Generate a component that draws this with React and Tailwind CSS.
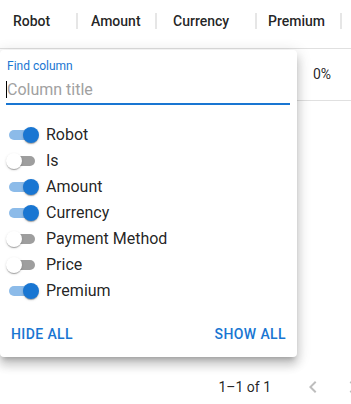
import React from 'react';

const headers = [
  { title: 'Robot', w: 'w-[78px]', pl: 'pl-[13px]' },
  { title: 'Amount', w: 'w-[79px]', pl: 'pl-[13px]' },
  { title: 'Currency', w: 'w-[100px]', pl: 'pl-[16px]' },
  { title: 'Premium', w: 'w-[85px]', pl: 'pl-[11px]' },
];

const columns = [
  { name: 'Robot', on: true },
  { name: 'Is', on: false },
  { name: 'Amount', on: true },
  { name: 'Currency', on: true },
  { name: 'Payment Method', on: false },
  { name: 'Price', on: false },
  { name: 'Premium', on: true },
];

const thumbShadow =
  'shadow-[0px_2px_1px_-1px_rgba(0,0,0,0.2),0px_1px_1px_0px_rgba(0,0,0,0.14),0px_1px_3px_0px_rgba(0,0,0,0.12)]';

const Toggle = ({ on }) => (
  <div className="relative w-[46px] h-[26px] shrink-0">
    <div
      className={
        'absolute left-[9px] top-[8px] w-[26px] h-[10px] rounded-full ' +
        (on ? 'bg-[#8cbbe9]' : 'bg-[#9e9e9e]')
      }
    />
    {on ? (
      <div className={'absolute left-[23px] top-[5px] w-[16px] h-[16px] rounded-full bg-[#1976d2] ' + thumbShadow} />
    ) : (
      <div className={'absolute left-[6px] top-[5px] w-[16px] h-[16px] rounded-full bg-white ' + thumbShadow} />
    )}
  </div>
);

const PageButton = ({ d }) => (
  <div className="w-10 h-10 flex items-center justify-center shrink-0">
    <svg width="24" height="24" viewBox="0 0 24 24" fill="rgba(0,0,0,0.26)">
      <path d={d} />
    </svg>
  </div>
);

export default function App() {
  return (
    <div className="relative w-[351px] h-[404px] overflow-hidden bg-white font-['Roboto',sans-serif] text-black/[0.87]">
      {/* header */}
      <div className="flex h-[49px] border-b border-[#e0e0e0] w-[420px]">
        {headers.map((h) => (
          <div key={h.title} className={'flex justify-between pt-[9px] shrink-0 ' + h.w}>
            <span className={'text-[14px] leading-6 font-medium ' + h.pl}>{h.title}</span>
            <span className="w-[2px] h-[16px] mt-[4px] bg-[#e6e6e6]" />
          </div>
        ))}
      </div>

      {/* row */}
      <div className="flex h-[52px] border-b border-[#e0e0e0] w-[420px]">
        <div className="w-[78px] shrink-0" />
        <div className="w-[79px] shrink-0" />
        <div className="w-[100px] shrink-0" />
        <div className="w-[85px] shrink-0 flex items-center justify-end pr-[11px] text-[14px]">0%</div>
      </div>

      <div className="h-[260px]" />

      {/* footer */}
      <div className="flex items-center justify-end h-[52px] w-[373px]">
        <span className="text-[14px] leading-6 mr-[22px]">1–1 of 1</span>
        <PageButton d="M15.41 16.59 10.83 12l4.58-4.59L14 6l-6 6 6 6 1.41-1.41z" />
        <PageButton d="M8.59 16.59 13.17 12 8.59 7.41 10 6l6 6-6 6-1.41-1.41z" />
      </div>

      {/* columns panel */}
      <div className="absolute left-0 top-[50px] w-[297px] h-[307px] bg-white rounded shadow-[0px_5px_5px_-3px_rgba(0,0,0,0.2),0px_8px_10px_1px_rgba(0,0,0,0.14),0px_3px_14px_2px_rgba(0,0,0,0.12)]">
        <div className="pl-[6px] pr-[7px] pt-[8px]">
          <div className="text-[12px] leading-4 text-[#1976d2] pl-px">Find column</div>
          <div className="mt-[4px] pb-px border-b-2 border-[#1976d2]">
            <div className="relative h-6 flex items-center">
              <span className="absolute left-0 top-[3px] w-px h-[17px] bg-black" />
              <span className="text-[16px] leading-6 pl-px text-[#a1a1a1]">Column title</span>
            </div>
          </div>
        </div>

        <div className="mt-[17px]">
          {columns.map((c) => (
            <div key={c.name} className="flex items-center h-[26px]">
              <Toggle on={c.on} />
              <span className="text-[16px] leading-[26px]">{c.name}</span>
            </div>
          ))}
        </div>

        <div className="mt-[12px] h-9 flex items-center justify-between text-[14px] font-medium tracking-[0.4px] text-[#1976d2]">
          <span className="pl-[11px]">HIDE ALL</span>
          <span className="pr-[11px]">SHOW ALL</span>
        </div>
      </div>
    </div>
  );
}
